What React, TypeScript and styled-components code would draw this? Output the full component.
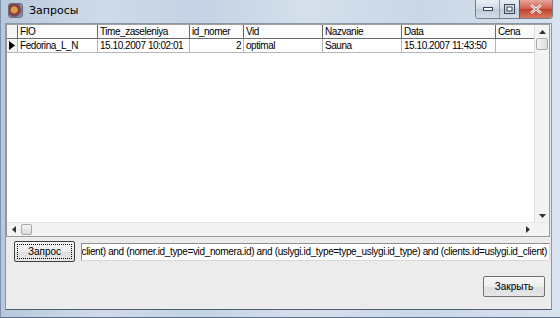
import styled, { createGlobalStyle } from "styled-components";

const GlobalStyle = createGlobalStyle`
  html, body {
    margin: 0;
    padding: 0;
    background: #ffffff;
  }
  body {
    font-family: "Liberation Sans", "DejaVu Sans", sans-serif;
    font-size: 10px;
  }
`;

const COLS = "11px 80px 92px 54px 79px 79px 94px 40px";

const Window = styled.div`
  width: 560px;
  height: 318px;
  box-sizing: border-box;
  display: flex;
  flex-direction: column;
  background: linear-gradient(90deg, #b7c8dc 0%, #cfdbe8 18%, #c3d2e4 35%, #d5e0ec 55%, #c9d7e7 75%, #d9e3ee 100%);
  border-left: 1px solid #7f93ab;
  border-bottom: 1px solid #5d7088;
  overflow: hidden;
`;

const TitleBar = styled.div`
  height: 22px;
  display: flex;
  align-items: flex-start;
  flex-shrink: 0;
`;

const AppIcon = styled.div`
  width: 15px;
  height: 15px;
  margin: 3px 0 0 7px;
  border-radius: 3px;
  background: radial-gradient(circle at 40% 45%, #d8a040 0 3px, #a4382c 4px, #6b4c6a 6px, #8a8fa8 8px);
  border: 1px solid #6d6d7c;
  box-sizing: border-box;
`;

const Title = styled.div`
  margin: 4px 0 0 6px;
  font-family: "DejaVu Sans", sans-serif;
  font-size: 11px;
  color: #000;
`;

const Caption = styled.div`
  margin-left: auto;
  margin-right: 7px;
  display: flex;
  height: 18px;
  border: 1px solid #6f7d8f;
  border-top: none;
  border-radius: 0 0 4px 4px;
  overflow: hidden;
`;

const CapButton = styled.div<{ $w: number; $close?: boolean }>`
  width: ${(p) => p.$w}px;
  height: 100%;
  display: flex;
  align-items: center;
  justify-content: center;
  background: ${(p) =>
    p.$close
      ? "linear-gradient(#e6a79c, #cf5a48 50%, #c0422f 51%, #d77a5e)"
      : "linear-gradient(#e8eef5, #cfd9e5 50%, #bfcbd9 51%, #d4dde8)"};
  border-left: ${(p) => (p.$close ? "1px solid #7a5550" : "1px solid #8796a8")};
  box-sizing: border-box;
  &:first-child {
    border-left: none;
  }
`;

const Client = styled.div`
  flex: 1;
  margin: 1px 8px 7px 4px;
  background: #ececec;
  border: 1px solid #8a97a6;
  border-bottom-color: #4f5d6e;
  display: flex;
  flex-direction: column;
`;

const Grid = styled.div`
  height: 213px;
  margin: 0 1px 0 0;
  background: #ffffff;
  border: 1px solid #9a9a9a;
  border-top-color: #a0a0a0;
  display: flex;
  flex-direction: column;
  box-sizing: border-box;
`;

const GridBody = styled.div`
  flex: 1;
  display: flex;
  min-height: 0;
`;

const Cells = styled.div`
  flex: 1;
  overflow: hidden;
`;

const Row = styled.div<{ $head?: boolean }>`
  display: grid;
  grid-template-columns: ${COLS};
  height: 14px;
  background: ${(p) => (p.$head ? "#fbfbfb" : "#ffffff")};
`;

const Cell = styled.div<{ $right?: boolean; $head?: boolean }>`
  box-sizing: border-box;
  border-right: 1px solid ${(p) => (p.$head ? "#6b6b6b" : "#b5b5b5")};
  border-bottom: 1px solid ${(p) => (p.$head ? "#6b6b6b" : "#b5b5b5")};
  padding: 0 2px;
  line-height: 14px;
  font-size: 10px;
  letter-spacing: -0.45px;
  white-space: nowrap;
  overflow: hidden;
  text-align: ${(p) => (p.$right ? "right" : "left")};
  color: #000;
`;

const Indicator = styled(Cell)`
  padding: 0;
  display: flex;
  align-items: center;
  justify-content: center;
  background: #f4f4f4;
`;

const VScroll = styled.div`
  width: 14px;
  background: #f3f3f3;
  border-left: 1px solid #e0e0e0;
  display: flex;
  flex-direction: column;
  align-items: center;
`;

const HScroll = styled.div`
  height: 13px;
  display: flex;
  align-items: center;
  background: #f3f3f3;
  border-top: 1px solid #e8e8e8;
  padding-right: 14px;
`;

const Arrow = styled.div`
  width: 14px;
  height: 13px;
  display: flex;
  align-items: center;
  justify-content: center;
  flex-shrink: 0;
`;

const Thumb = styled.div<{ $vertical?: boolean }>`
  width: ${(p) => (p.$vertical ? "12px" : "11px")};
  height: ${(p) => (p.$vertical ? "12px" : "11px")};
  background: linear-gradient(${(p) => (p.$vertical ? "90deg" : "180deg")}, #f4f4f4, #dcdcdc);
  border: 1px solid #a8a8a8;
  border-radius: 2px;
  box-sizing: border-box;
`;

const Spacer = styled.div`
  flex: 1;
`;

const QueryRow = styled.div`
  display: flex;
  align-items: center;
  gap: 6px;
  padding: 4px 1px 0 8px;
`;

const Button = styled.div<{ $focused?: boolean }>`
  width: ${(p) => (p.$focused ? "61px" : "62px")};
  height: 21px;
  flex-shrink: 0;
  box-sizing: border-box;
  background: linear-gradient(#f8f8f8, #ececec 50%, #dfdfdf 51%, #e6e6e6);
  border: 1px solid ${(p) => (p.$focused ? "#3c3c3c" : "#707070")};
  border-radius: 2px;
  display: flex;
  align-items: center;
  justify-content: center;
  font-size: 10px;
  color: #000;
  position: relative;
  &::after {
    content: "";
    display: ${(p) => (p.$focused ? "block" : "none")};
    position: absolute;
    inset: 2px;
    border: 1px dotted #000;
  }
`;

const Edit = styled.div`
  flex: 1;
  min-width: 0;
  height: 18px;
  box-sizing: border-box;
  background: #ffffff;
  border: 1px solid #8e8e8e;
  border-bottom-color: #d8d8d8;
  border-right-color: #d8d8d8;
  display: flex;
  justify-content: flex-end;
  align-items: center;
  overflow: hidden;
  padding-right: 2px;
`;

const EditText = styled.span`
  white-space: nowrap;
  font-size: 10px;
  letter-spacing: -0.35px;
  color: #000;
`;

const CloseRow = styled.div`
  display: flex;
  justify-content: flex-end;
  padding: 14px 6px 0 0;
`;

const headers = ["FIO", "Time_zaseleniya", "id_nomer", "Vid", "Nazvanie", "Data", "Cena"];
const row = ["Fedorina_L_N", "15.10.2007 10:02:01", "2", "optimal", "Sauna", "15.10.2007 11:43:50", ""];

export default function App() {
  return (
    <>
      <GlobalStyle />
      <Window>
        <TitleBar>
          <AppIcon />
          <Title>Запросы</Title>
          <Caption>
            <CapButton $w={23}>
              <svg width="10" height="4" viewBox="0 0 10 4">
                <rect x="0.5" y="0.5" width="9" height="3" fill="#fff" stroke="#3a4656" />
              </svg>
            </CapButton>
            <CapButton $w={20}>
              <svg width="11" height="10" viewBox="0 0 11 10">
                <rect x="0.5" y="0.5" width="10" height="9" fill="none" stroke="#3a4656" />
                <rect x="3" y="3" width="5" height="4" fill="#fff" stroke="#3a4656" />
              </svg>
            </CapButton>
            <CapButton $w={33} $close>
              <svg width="12" height="10" viewBox="0 0 12 10">
                <path d="M1 1 L11 9 M11 1 L1 9" stroke="#fff" strokeWidth="2.6" />
                <path d="M1 1 L11 9 M11 1 L1 9" stroke="#5c2b26" strokeWidth="0.6" fill="none" />
              </svg>
            </CapButton>
          </Caption>
        </TitleBar>
        <Client>
          <Grid>
            <GridBody>
              <Cells>
                <Row $head>
                  <Indicator $head />
                  {headers.map((h) => (
                    <Cell key={h} $head>
                      {h}
                    </Cell>
                  ))}
                </Row>
                <Row>
                  <Indicator>
                    <svg width="6" height="9" viewBox="0 0 6 9">
                      <path d="M0 0 L6 4.5 L0 9 Z" fill="#000" />
                    </svg>
                  </Indicator>
                  {row.map((v, i) => (
                    <Cell key={i} $right={i === 2}>
                      {v}
                    </Cell>
                  ))}
                </Row>
              </Cells>
              <VScroll>
                <Arrow>
                  <svg width="7" height="4" viewBox="0 0 7 4">
                    <path d="M0 4 L3.5 0 L7 4 Z" fill="#333" />
                  </svg>
                </Arrow>
                <Thumb $vertical />
                <Spacer />
                <Arrow>
                  <svg width="7" height="4" viewBox="0 0 7 4">
                    <path d="M0 0 L3.5 4 L7 0 Z" fill="#333" />
                  </svg>
                </Arrow>
              </VScroll>
            </GridBody>
            <HScroll>
              <Arrow>
                <svg width="4" height="7" viewBox="0 0 4 7">
                  <path d="M4 0 L0 3.5 L4 7 Z" fill="#333" />
                </svg>
              </Arrow>
              <Thumb />
              <Spacer />
              <Arrow>
                <svg width="4" height="7" viewBox="0 0 4 7">
                  <path d="M0 0 L4 3.5 L0 7 Z" fill="#333" />
                </svg>
              </Arrow>
            </HScroll>
          </Grid>
          <QueryRow>
            <Button $focused>Запрос</Button>
            <Edit>
              <EditText>
                client) and (nomer.id_type=vid_nomera.id) and (uslygi.id_type=type_uslygi.id_type) and (clients.id=uslygi.id_client)
              </EditText>
            </Edit>
          </QueryRow>
          <CloseRow>
            <Button>Закрыть</Button>
          </CloseRow>
        </Client>
      </Window>
    </>
  );
}
